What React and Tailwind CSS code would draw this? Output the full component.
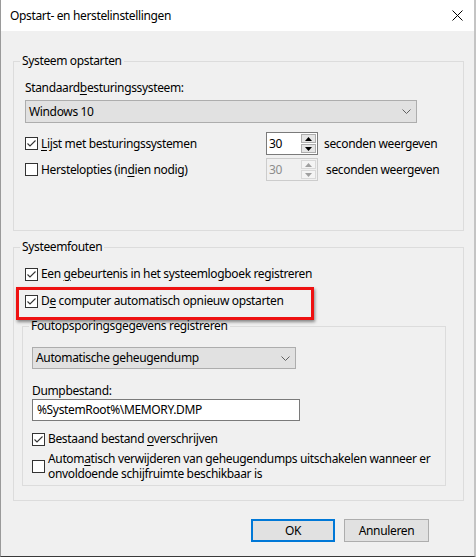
import React from "react";

function CheckBox({ checked }) {
  return (
    <span className="w-[13px] h-[13px] border border-[#333333] bg-white flex-none flex items-center justify-center">
      {checked && (
        <svg width="11" height="11" viewBox="0 0 11 11">
          <path d="M1.5 5.5 L4 8 L9.5 2.5" stroke="#333333" strokeWidth="1.1" fill="none" />
        </svg>
      )}
    </span>
  );
}

function Chevron() {
  return (
    <svg width="9" height="5" viewBox="0 0 9 5">
      <path d="M0.5 0.5 L4.5 4.5 L8.5 0.5" stroke="#606060" fill="none" />
    </svg>
  );
}

function Spinner({ disabled }) {
  const border = disabled ? "border-[#cccccc]" : "border-[#7a7a7a]";
  const arrow = disabled ? "#a0a0a0" : "#000000";
  const btn = disabled
    ? "border-[#d9d9d9] bg-[#f4f4f4]"
    : "border-[#adadad] bg-[#e5e5e5]";
  return (
    <div className={`w-[52px] h-[23px] border ${border} flex ${disabled ? "bg-[#f0f0f0]" : "bg-white"}`}>
      <div className={`flex-1 pl-[2px] leading-[21px] ${disabled ? "text-[#8c8c8c]" : "text-black"}`}>30</div>
      <div className="w-[16px] flex flex-col gap-[1px] py-[1px] pr-[1px]">
        <div className={`flex-1 border ${btn} flex items-center justify-center`}>
          <svg width="7" height="4" viewBox="0 0 7 4">
            <path d="M0 4 L3.5 0 L7 4 Z" fill={arrow} />
          </svg>
        </div>
        <div className={`flex-1 border ${btn} flex items-center justify-center`}>
          <svg width="7" height="4" viewBox="0 0 7 4">
            <path d="M0 0 L3.5 4 L7 0 Z" fill={arrow} />
          </svg>
        </div>
      </div>
    </div>
  );
}

export default function App() {
  return (
    <div className="w-[476px] h-[557px] bg-[#f0f0f0] font-['Noto_Sans',sans-serif] text-[12px] tracking-[-0.35px] text-black flex flex-col border-l border-l-[#9a9a9a] border-r-2 border-r-[#c4c4c4] border-b border-b-[#3a3a3a] overflow-hidden whitespace-nowrap">
      {/* Title bar */}
      <div className="h-[31px] bg-white flex items-center justify-between pl-[9px] pr-[11px] flex-none">
        <span className="leading-[16px]">Opstart- en herstelinstellingen</span>
        <svg width="11" height="11" viewBox="0 0 11 11">
          <path d="M0.5 0.5 L10.5 10.5 M10.5 0.5 L0.5 10.5" stroke="#000" strokeWidth="1" />
        </svg>
      </div>

      <div className="flex flex-col pl-[12px] pr-[10px] pt-[22px]">
        {/* Group 1 */}
        <fieldset className="border border-[#dcdcdc] w-[451px] h-[178px] flex flex-col">
          <legend className="ml-[6px] px-[2px] leading-[16px]">Systeem opstarten</legend>
          <div className="flex flex-col pl-[11px]">
            <div className="mt-[11px] leading-[16px]">
              Standaard<u className="underline-offset-2">b</u>esturingssysteem:
            </div>
            <div className="mt-[4px] w-[392px] h-[23px] bg-[#e1e1e1] border border-[#adadad] flex items-center justify-between pl-[3px] pr-[5px]">
              <span>Windows 10</span>
              <Chevron />
            </div>
            <div className="mt-[9px] flex items-center h-[23px]">
              <div className="w-[241px] flex items-center gap-[3px]">
                <CheckBox checked />
                <span className="leading-[16px]">
                  <u className="underline-offset-2">L</u>ijst met besturingssystemen
                </span>
              </div>
              <Spinner />
              <span className="ml-[6px] leading-[16px]">seconden weergeven</span>
            </div>
            <div className="mt-[3px] flex items-center h-[23px]">
              <div className="w-[241px] flex items-center gap-[3px]">
                <CheckBox />
                <span className="leading-[16px]">
                  Herstelopties (in<u className="underline-offset-2">d</u>ien nodig)
                </span>
              </div>
              <Spinner disabled />
              <span className="ml-[8px] leading-[16px]">seconden weergeven</span>
            </div>
          </div>
        </fieldset>

        {/* Group 2 */}
        <fieldset className="mt-[8px] border border-[#dcdcdc] w-[451px] h-[262px] flex flex-col">
          <legend className="ml-[6px] px-[2px] leading-[16px]">Systeemfouten</legend>
          <div className="flex flex-col pl-[8px] pr-[17px]">
            <div className="mt-[11px] pl-[3px] flex items-center gap-[3px] h-[16px]">
              <CheckBox checked />
              <span className="leading-[16px]">
                Een <u className="underline-offset-2">g</u>ebeurtenis in het systeemlogboek registreren
              </span>
            </div>
            <div className="relative mt-[11px] pl-[3px] flex items-center gap-[3px] h-[16px]">
              <CheckBox checked />
              <span className="leading-[16px]">
                D<u className="underline-offset-2">e</u> computer automatisch opnieuw opstarten
              </span>
              <div className="absolute left-[-6px] top-[-6px] w-[298px] h-[33px] border-[3px] border-[#ee1111] shadow-[1px_2px_3px_rgba(0,0,0,0.45)] pointer-events-none" />
            </div>

            {/* Inner group */}
            <fieldset className="mt-[9px] border border-[#dcdcdc] h-[168px] flex flex-col">
              <legend className="ml-[6px] px-[2px] leading-[16px]">Foutopsporingsgegevens registreren</legend>
              <div className="flex flex-col pl-[9px]">
                <div className="mt-[13px] w-[264px] h-[22px] bg-[#e1e1e1] border border-[#adadad] flex items-center justify-between pl-[3px] pr-[5px]">
                  <span>Automatische geheugendump</span>
                  <Chevron />
                </div>
                <div className="mt-[14px] leading-[16px]">Dumpbestand:</div>
                <div className="w-[268px] h-[22px] bg-white border border-[#7a7a7a] flex items-center pl-[4px]">
                  %SystemRoot%\MEMORY.DMP
                </div>
                <div className="mt-[10px] flex items-center gap-[3px] h-[16px]">
                  <CheckBox checked />
                  <span className="leading-[16px]">
                    Bestaand bestand <u className="underline-offset-2">o</u>verschrijven
                  </span>
                </div>
                <div className="mt-[4px] flex items-center gap-[3px]">
                  <CheckBox />
                  <span className="leading-[15px]">
                    Autom<u className="underline-offset-2">a</u>tisch verwijderen van geheugendumps uitschakelen wanneer er
                    <br />
                    onvoldoende schijfruimte beschikbaar is
                  </span>
                </div>
              </div>
            </fieldset>
          </div>
        </fieldset>

        {/* Buttons */}
        <div className="mt-[18px] flex justify-end gap-[9px] pr-[35px]">
          <button className="w-[84px] h-[23px] bg-[#e1e1e1] border-2 border-[#0078d7] leading-[16px]">OK</button>
          <button className="w-[85px] h-[23px] bg-[#e1e1e1] border border-[#adadad] leading-[16px]">Annuleren</button>
        </div>
      </div>
    </div>
  );
}
